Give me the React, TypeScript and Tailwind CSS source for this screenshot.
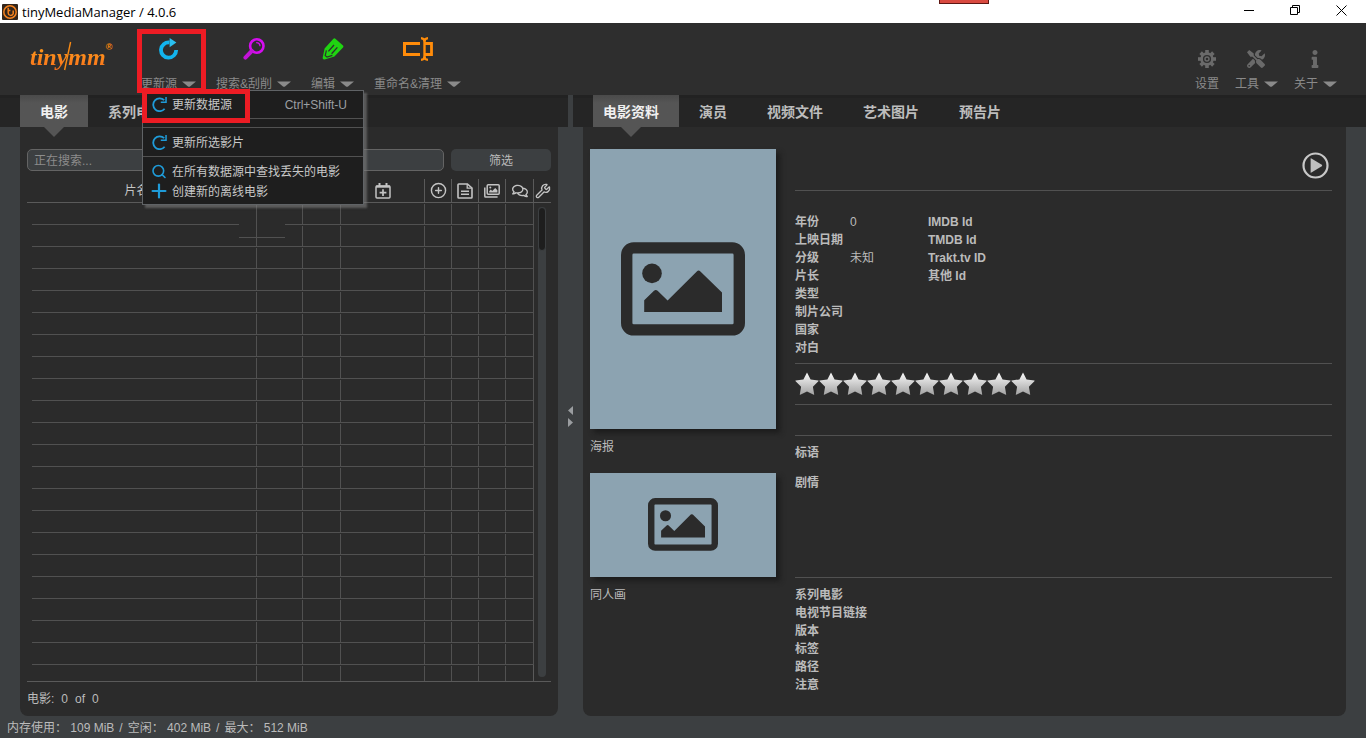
import React from "react";
import { CirclePlus, Plus, Search, Wrench } from "lucide-react";
import { FaInfo, FaRegComments, FaTools } from "react-icons/fa";

function AppIcon() {
  return (
    <svg width="16" height="16" viewBox="0 0 16 16" aria-hidden="true">
      <rect width="16" height="16" rx="1" fill="#33261c" />
      <circle cx="8" cy="8" r="6.2" fill="none" stroke="#f5821f" strokeWidth="1.5" />
      <path d="M6.2 3.8V9a2.6 2.6 0 0 0 5 .8V6.6M6.2 6.4h2.2" fill="none" stroke="#f5821f" strokeWidth="1.5" />
    </svg>
  );
}

function UpdateIcon() {
  return (
    <svg width="20" height="22" viewBox="0 0 20 22" aria-hidden="true">
      <path d="M17.2 12A7.6 7.6 0 1 1 10.5 4.5" fill="none" stroke="#12b4ee" strokeWidth="3.8" />
      <path d="M10.6 0L17.4 4.6L10.6 9.2Z" fill="#2bc0f0" />
    </svg>
  );
}

function ScrapeIcon() {
  return (
    <svg width="22" height="22" viewBox="0 0 22 22" aria-hidden="true">
      <circle cx="13.8" cy="8" r="6.7" fill="none" stroke="#d60df0" strokeWidth="2.6" />
      <path d="M13.2 4.6a3.8 3.8 0 0 1 3.8 3.6" fill="none" stroke="#d60df0" strokeWidth="1.3" />
      <path d="M8.8 13L2.4 19.6" stroke="#c313d8" strokeWidth="4" strokeLinecap="round" />
    </svg>
  );
}

function EditIcon() {
  return (
    <svg width="22" height="22" viewBox="0 0 22 22" aria-hidden="true">
      <path d="M11.4.8Q12.4-.1 13.4.8L21 7.6Q21.8 8.6 21 9.6L12.4 18.6L2.6 21.4Q.4 21.8.7 19.6L2.6 10.6Z" fill="#1fd411" />
      <path d="M4.4 12.4L3.2 17.6L5 19L10.4 17.4" fill="none" stroke="#2e2e2e" strokeWidth="1.2" />
      <path d="M6.4 13.4L12 7M9.6 15.8L15.4 9.4" stroke="#2e2e2e" strokeWidth="1.3" />
    </svg>
  );
}

function RenameIcon() {
  return (
    <svg width="30" height="24" viewBox="0 0 30 24" fill="none" stroke="#ff8c0a" aria-hidden="true">
      <path d="M17 6.5H1.5V17.5H17" strokeWidth="3" />
      <path d="M22 6.5H28.5V17.5H22" strokeWidth="2.8" />
      <path d="M21.5 3V21" strokeWidth="2.4" />
      <path d="M18 1.2Q21.5 1.4 21.5 4.6Q21.5 1.4 25 1.2M18 22.8Q21.5 22.6 21.5 19.4Q21.5 22.6 25 22.8" strokeWidth="2.2" />
    </svg>
  );
}

const TEETH = [0, 45, 90, 135, 180, 225, 270, 315];

function GearIcon() {
  return (
    <svg width="18" height="18" viewBox="0 0 18 18" fill="none" stroke="#6a6a6a" aria-hidden="true">
      {TEETH.map((a) => (
        <path key={a} d="M9 0V4" strokeWidth="3.6" transform={`rotate(${a} 9 9)`} />
      ))}
      <circle cx="9" cy="9" r="5.4" strokeWidth="2.6" />
      <circle cx="9" cy="9" r="2" strokeWidth="1.4" />
    </svg>
  );
}

function Chevron() {
  return (
    <svg width="14" height="6" viewBox="0 0 14 6" aria-hidden="true">
      <path d="M0 0.5H14L8 5.4Q7 6 6 5.4Z" fill="#8a8a8a" />
    </svg>
  );
}

function ReloadIcon() {
  return (
    <svg className="-mt-0.5" width="15" height="15" viewBox="0 0 14 14" aria-hidden="true">
      <path d="M11.8 11A6 6 0 1 1 11.4 3" fill="none" stroke="#1f9bd8" strokeWidth="1.7" />
      <path d="M13.8 0V5.6H8.2V4.2H12.4V0Z" fill="#1f9bd8" />
    </svg>
  );
}

function CalendarIcon() {
  return (
    <svg width="16" height="16" viewBox="0 0 16 16" fill="none" stroke="#c4c4c4" aria-hidden="true">
      <rect x="1" y="3" width="14" height="12" rx="1" strokeWidth="1.5" />
      <path d="M1 3.6H15" strokeWidth="2.2" />
      <path d="M4.5 0V4M11.5 0V4" strokeWidth="2" />
      <path d="M8 6.2V13M4.6 9.6H11.4" strokeWidth="1.7" />
    </svg>
  );
}

function FileIcon() {
  return (
    <svg width="16" height="16" viewBox="0 0 16 16" fill="none" stroke="#c4c4c4" aria-hidden="true">
      <path d="M10.4 1H1.8Q1 1 1 1.8V14.2Q1 15 1.8 15H14.2Q15 15 15 14.2V5Z" strokeWidth="1.6" />
      <path d="M10.2 1V5.2H15" strokeWidth="1.3" />
      <path d="M4 8.2H12M4 11.2H12" strokeWidth="1.6" />
    </svg>
  );
}

function ImagesIcon() {
  return (
    <svg width="16" height="14" viewBox="0 0 16 14" fill="none" stroke="#c4c4c4" aria-hidden="true">
      <rect x="3.2" y="0.8" width="12" height="9.4" rx="1" strokeWidth="1.5" />
      <path d="M0.8 3.4V12.2Q.8 13 1.6 13H13.6" strokeWidth="1.5" />
      <path d="M5.2 8.6V7.2L6.8 5.6L8.2 7L11.2 4L13.4 6.2V8.6Z" fill="#c4c4c4" stroke="none" />
      <circle cx="6.3" cy="3.6" r="1" fill="#c4c4c4" stroke="none" />
    </svg>
  );
}

function PicturePlaceholder({ className }: { className: string }) {
  return (
    <svg className={className} viewBox="0 0 124 94" fill="#2b2b2b" aria-hidden="true">
      <rect x="5.7" y="5.9" width="112.6" height="82" rx="7" fill="none" stroke="#2b2b2b" strokeWidth="11.4" />
      <circle cx="31" cy="31.4" r="9.8" />
      <path d="M23.2 70V58.2L33 48.8Q34.8 47.2 36.6 48.8L46.6 58.4L75.8 29.4Q77.6 27.8 79.4 29.4L101 50.4V70Z" />
    </svg>
  );
}

function Star() {
  return (
    <svg width="24" height="24" viewBox="0 0 24 24" aria-hidden="true">
      <defs>
        <linearGradient id="star" x1="0" y1="0" x2="0" y2="1">
          <stop offset="0" stopColor="#fafafa" />
          <stop offset="1" stopColor="#a2a2a2" />
        </linearGradient>
      </defs>
      <path
        d="M12 .5L15.6 7.4L23.4 8.6Q23.8 8.7 23.4 9.2L17.9 14.8L19.2 22.4Q19.2 22.9 18.7 22.7L12 19.4L5.3 22.7Q4.8 22.9 4.8 22.4L6.1 14.8L.6 9.2Q.2 8.7.6 8.6L8.4 7.4Z"
        fill="url(#star)"
      />
    </svg>
  );
}

function ToolButton({ label, icon, menu = true }: { label: string; icon: React.ReactNode; menu?: boolean }) {
  return (
    <button type="button" className="flex flex-col items-center text-[#8a8a8a]">
      <span className="flex h-6 items-center">{icon}</span>
      <span className="mt-[15px] flex items-center gap-[5px] leading-4">
        {label}
        {menu && <Chevron />}
      </span>
    </button>
  );
}

function MenuItem({ icon, label, shortcut }: { icon: React.ReactNode; label: string; shortcut?: string }) {
  return (
    <button type="button" role="menuitem" className="flex h-5 w-full items-center gap-[5px] pr-4 pl-2 text-left text-[#c8c8c8]">
      <span className="flex w-4 justify-center">{icon}</span>
      <span className="whitespace-nowrap">{label}</span>
      {shortcut && <span className="ml-auto text-[#9c9fa3]">{shortcut}</span>}
    </button>
  );
}

function UpdateMenu() {
  return (
    <div
      role="menu"
      className="absolute top-[67px] left-px z-20 w-[222px] border border-[#606366] bg-[#1e1e1e] shadow-[3px_3px_2px_#7b7b7b99]"
    >
      <div className="pt-1 pb-[3px]">
        <MenuItem icon={<ReloadIcon />} label="更新数据源" shortcut="Ctrl+Shift-U" />
      </div>
      <div className="h-2.5 border-y border-[#515151]" />
      <div className="pt-[5px] pb-[3px]">
        <MenuItem icon={<ReloadIcon />} label="更新所选影片" />
      </div>
      <div className="border-t border-[#515151] pt-[5px] pb-0.5">
        <MenuItem icon={<Search className="-mt-0.5" size={17} color="#1f9bd8" strokeWidth={2.4} />} label="在所有数据源中查找丢失的电影" />
        <MenuItem icon={<Plus className="-mx-1 -mt-0.5" size={22} color="#1f9bd8" strokeWidth={2.4} />} label="创建新的离线电影" />
      </div>
      <div className="pointer-events-none absolute top-[-2px] left-[-1px] h-[34px] w-[108px] border-5 border-[#ed1c24]" />
    </div>
  );
}

function Tab({ label, active, className }: { label: string; active?: boolean; className: string }) {
  return (
    <button
      type="button"
      role="tab"
      aria-selected={!!active}
      className={
        active
          ? `h-8 bg-linear-to-b from-[#4a4a4a] to-[#555555] to-25% font-bold text-[#f0f0f0] ${className}`
          : `h-8 font-bold text-[#bdbdbd] ${className}`
      }
    >
      <span className="relative flex h-full items-center justify-center pt-px">
        {label}
        {active && (
          <svg className="absolute top-full z-10" width="20" height="10" viewBox="0 0 20 10" aria-hidden="true">
            <path d="M0 0H20L10 10Z" fill="#555555" />
          </svg>
        )}
      </span>
    </button>
  );
}

const ROWS = Array.from({ length: 22 }, (_, i) => i);
const CELLS = [0, 1, 2, 3, 4, 5, 6];

function MovieTable() {
  return (
    <div className="relative mt-2">
      <table className="w-full table-fixed border-separate border-spacing-0">
        <colgroup>
          <col className="w-[5px]" />
          <col />
          <col className="w-[46px]" />
          <col className="w-[38px]" />
          <col className="w-[84px]" />
          <col className="w-[27px]" />
          <col className="w-[27px]" />
          <col className="w-[27px]" />
          <col className="w-[28px]" />
          <col className="w-[17px]" />
        </colgroup>
        <thead>
          <tr className="h-6 text-[#c4c4c4] [&>th]:border-b [&>th]:border-[#5a5a5a] [&>th]:p-0 [&>th]:font-normal">
            <th />
            <th>
              <span className="block pt-px pr-4">片名</span>
            </th>
            <th />
            <th />
            <th>
              <span className="flex h-[23px] items-center justify-center border-r border-[#5a5a5a]"><CalendarIcon /></span>
            </th>
            <th>
              <span className="flex h-[23px] items-center justify-center border-r border-[#5a5a5a]"><CirclePlus size={17} strokeWidth={2} /></span>
            </th>
            <th>
              <span className="flex h-[23px] items-center justify-center border-r border-[#5a5a5a]"><FileIcon /></span>
            </th>
            <th>
              <span className="flex h-[23px] items-center justify-center border-r border-[#5a5a5a]"><ImagesIcon /></span>
            </th>
            <th>
              <span className="flex h-[23px] items-center justify-center border-r border-[#5a5a5a]"><FaRegComments size={16} /></span>
            </th>
            <th>
              <span className="flex justify-center"><Wrench size={16} strokeWidth={2} /></span>
            </th>
          </tr>
        </thead>
        <tbody>
          {ROWS.map((r) => {
            const last = r === ROWS.length - 1;
            const cell = last ? "p-0" : "border-b border-[#515151] p-0";
            return (
              <tr key={r}>
                <td className="p-0" />
                {CELLS.map((c) => (
                  <td key={c} className={cell}>
                    <div className={last ? "mt-px h-[15px] border-r border-[#515151]" : "mt-px h-5 border-r border-[#515151]"} />
                  </td>
                ))}
                <td className={`${cell} border-r border-[#5a5a5a]`} />
                <td className="p-0" />
              </tr>
            );
          })}
        </tbody>
      </table>
      <div className="absolute top-[45px] left-[212px] h-3.5 w-[46px] border-b border-[#515151] bg-[#2b2b2b]">
        <div className="ml-[17px] h-full w-px bg-[#515151]" />
      </div>
      <div className="absolute top-7 right-[5px] bottom-1 w-2 rounded bg-[#3c3f41]">
        <div className="h-11 rounded border border-[#3c3f41] bg-[#1e1e1e]" />
      </div>
    </div>
  );
}

function MoviesPanel() {
  return (
    <section className="flex w-[538px] shrink-0 flex-col rounded-b-lg bg-[#2b2b2b] px-[7px] pt-[22px]">
      <div className="flex gap-[7px]">
        <input
          type="text"
          aria-label="搜索"
          placeholder="正在搜索..."
          className="h-[22px] min-w-0 flex-1 rounded-[5px] border border-[#646464] bg-[#3c3f41] px-1.5 pt-0.5 placeholder:text-[#8c8c8c]"
        />
        <button type="button" className="h-[22px] w-[100px] rounded-[5px] bg-[#3c3f41] pt-0.5">
          筛选
        </button>
      </div>
      <MovieTable />
      <div className="flex h-[35px] items-center gap-[7px] border-t border-[#5a5a5a]">
        <span>电影:</span>
        <span>0</span>
        <span>of</span>
        <span>0</span>
      </div>
    </section>
  );
}

const FACTS: [string, string, string][] = [
  ["年份", "0", "IMDB Id"],
  ["上映日期", "", "TMDB Id"],
  ["分级", "未知", "Trakt.tv ID"],
  ["片长", "", "其他 Id"],
  ["类型", "", ""],
  ["制片公司", "", ""],
  ["国家", "", ""],
  ["对白", "", ""],
];

const EXTRA = ["系列电影", "电视节目链接", "版本", "标签", "路径", "注意"];

function DetailsPanel() {
  return (
    <section className="flex min-w-0 flex-1 gap-[19px] rounded-b-lg bg-[#2b2b2b] pt-[22px] pr-3.5 pl-[7px]">
      <div className="w-[186px] shrink-0">
        <figure>
          <div className="flex h-[280px] items-center justify-center bg-[#8ca3b1] shadow-[4px_4px_5px_#1c1c1c]">
            <PicturePlaceholder className="w-[124px]" />
          </div>
          <figcaption className="flex h-11 items-center pb-2">海报</figcaption>
        </figure>
        <figure>
          <div className="flex h-[104px] items-center justify-center bg-[#8ca3b1] shadow-[4px_4px_5px_#1c1c1c]">
            <PicturePlaceholder className="w-[70px]" />
          </div>
          <figcaption className="flex h-11 items-center pb-2">同人画</figcaption>
        </figure>
      </div>
      <div className="min-w-0 flex-1">
        <div className="flex h-[42px] justify-end border-b border-[#515151] pt-[3px] pr-[3px]">
          <button type="button" aria-label="播放" className="size-[27px]">
            <svg width="27" height="27" viewBox="0 0 27 27" aria-hidden="true">
              <circle cx="13.5" cy="13.5" r="12" fill="none" stroke="#c8c8c8" strokeWidth="2.2" />
              <path d="M8.6 6.8Q8.6 6 9.4 6.4L19.8 12.8Q20.6 13.5 19.8 14.2L9.4 20.6Q8.6 21 8.6 20.2Z" fill="#c0c0c0" />
            </svg>
          </button>
        </div>
        <dl className="mt-[22px] mb-1.5 grid grid-cols-[54px_79px_1fr] leading-[18px]">
          {FACTS.map(([name, value, id]) => (
            <React.Fragment key={name}>
              <dt className="h-[18px] font-bold whitespace-nowrap">{name}</dt>
              <dd className="pl-px">{value}</dd>
              <dt className="font-bold">{id}</dt>
            </React.Fragment>
          ))}
        </dl>
        <div className="flex h-[42px] items-center border-y border-[#515151]" aria-label="评分">
          {Array.from({ length: 10 }, (_, i) => (
            <Star key={i} />
          ))}
        </div>
        <div className="h-[31px] border-b border-[#515151]" />
        <div className="h-[142px] border-b border-[#515151] pt-2 leading-[18px] font-bold">
          <h3>标语</h3>
          <h3 className="mt-3">剧情</h3>
        </div>
        <div className="pt-2 leading-[18px] font-bold">
          {EXTRA.map((name) => (
            <p key={name}>{name}</p>
          ))}
        </div>
      </div>
    </section>
  );
}

export default function App() {
  return (
    <div className="flex min-h-screen flex-col bg-[#3c3f41] font-['Liberation_Sans','Noto_Sans_CJK_SC',sans-serif] text-xs text-[#bbbbbb]">
      <header className="relative flex h-[23px] items-center bg-white pr-0.5 pl-0.5 text-black">
        <AppIcon />
        <h1 className="ml-1 font-['Open_Sans',sans-serif] text-[13px] leading-5">tinyMediaManager / 4.0.6</h1>
        <div className="absolute top-0 right-[377px] h-1 w-[50px] border border-t-0 border-[#5e1713] bg-[#d94a40]" />
        <div className="mb-0.5 ml-auto flex">
          <button type="button" aria-label="最小化" className="flex h-5 w-[46px] items-center justify-center">
            <svg width="11" height="11" viewBox="0 0 11 11" stroke="black" aria-hidden="true">
              <path d="M0 5.5H10" />
            </svg>
          </button>
          <button type="button" aria-label="还原" className="flex h-5 w-[46px] items-center justify-center">
            <svg width="11" height="11" viewBox="0 0 11 11" fill="none" stroke="black" aria-hidden="true">
              <path d="M.5 2.5H7.5V9.5H.5ZM2.5 2.5V.5H9.5V7.5H7.5" />
            </svg>
          </button>
          <button type="button" aria-label="关闭" className="flex h-5 w-[46px] items-center justify-center">
            <svg width="11" height="11" viewBox="0 0 11 11" stroke="black" aria-hidden="true">
              <path d="M.5 .5L10.5 10.5M10.5 .5L.5 10.5" />
            </svg>
          </button>
        </div>
      </header>

      <div className="flex h-[72px] items-start bg-[#2e2e2e] pr-[29px] pl-[30px]">
        <div className="flex w-[111px] items-start pt-[18px] font-['Liberation_Serif',serif] text-2xl leading-8 font-bold text-[#ff8a0c] italic">
          <span className="bg-linear-to-b from-[#ffa31a] to-[#f76b1c] bg-clip-text text-transparent">tiny</span>
          <svg className="-mx-1" width="9" height="30" viewBox="0 0 9 30" aria-hidden="true">
            <path d="M7.6 1L1.6 29" stroke="#f98a14" strokeWidth="1.4" />
          </svg>
          <span className="bg-linear-to-b from-[#ffa31a] to-[#f76b1c] bg-clip-text text-transparent">mm</span>
          <span className="font-['Liberation_Sans',sans-serif] text-[9px] leading-3 not-italic">®</span>
        </div>
        <nav className="flex gap-5 pt-3.5">
          <div className="relative -mt-3.5 pt-3.5">
            <ToolButton label="更新源" icon={<UpdateIcon />} />
            <div className="pointer-events-none absolute top-1.5 -left-1 h-16 w-[69px] border-5 border-[#ed1c24]" />
            <UpdateMenu />
          </div>
          <ToolButton label="搜索&刮削" icon={<ScrapeIcon />} />
          <ToolButton label="编辑" icon={<EditIcon />} />
          <ToolButton label="重命名&清理" icon={<RenameIcon />} />
        </nav>
        <nav className="ml-auto flex gap-4 pt-6 [&_button>span:last-child]:mt-[5px]">
          <ToolButton label="设置" icon={<GearIcon />} menu={false} />
          <ToolButton label="工具" icon={<FaTools size={18} color="#6a6a6a" />} />
          <ToolButton label="关于" icon={<FaInfo size={18} color="#6a6a6a" />} />
        </nav>
      </div>

      <div className="flex text-sm">
        <div role="tablist" className="flex w-[568px] shrink-0 bg-[#252525] pl-5 shadow-[inset_0_3px_0_#222222]">
          <Tab label="电影" active className="px-5" />
          <Tab label="系列电影" className="px-5" />
        </div>
        <div className="w-[5px] shrink-0" />
        <div role="tablist" className="flex min-w-0 flex-1 bg-[#252525] pl-5 shadow-[inset_0_3px_0_#222222]">
          <Tab label="电影资料" active className="pr-5 pl-2.5" />
          <Tab label="演员" className="px-5" />
          <Tab label="视频文件" className="px-5" />
          <Tab label="艺术图片" className="px-5" />
          <Tab label="预告片" className="px-5" />
        </div>
      </div>

      <main className="flex flex-1 px-5">
        <MoviesPanel />
        <div className="flex w-[25px] shrink-0 flex-col items-center justify-center gap-[3px] pb-2.5">
          <svg width="5" height="9" viewBox="0 0 5 9" aria-hidden="true">
            <path d="M5 0V9L0 4.5Z" fill="#9a9da0" />
          </svg>
          <svg width="5" height="9" viewBox="0 0 5 9" aria-hidden="true">
            <path d="M0 0V9L5 4.5Z" fill="#9a9da0" />
          </svg>
        </div>
        <DetailsPanel />
      </main>

      <footer className="flex h-[22px] items-center gap-[5px] px-[7px] pt-0.5">
        <span>内存使用： 109 MiB</span>
        <span>/</span>
        <span>空闲： 402 MiB</span>
        <span>/</span>
        <span>最大： 512 MiB</span>
      </footer>
    </div>
  );
}
